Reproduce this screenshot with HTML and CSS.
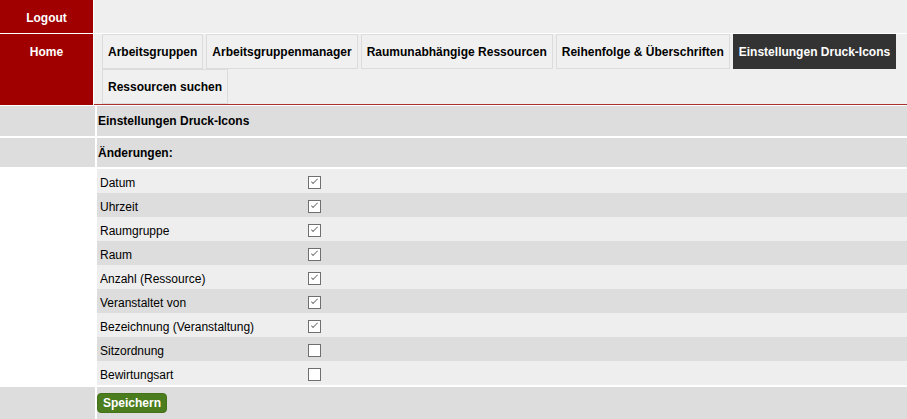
FILE: index.html
```html
<!DOCTYPE html>
<html lang="de">
<head>
    <meta charset="UTF-8">
    <meta name="viewport" content="width=device-width, initial-scale=1.0">
    <title>Einstellungen Druck-Icons</title>
    <link rel="stylesheet" href="styles.css">
</head>
<body>
    <div class="header">
        <a class="side-link logout" href="#">Logout</a>
        <div class="topbar"></div>
        <a class="side-link home" href="#">Home</a>
        <nav class="tabs">
            <a class="tab" href="#">Arbeitsgruppen</a>
            <a class="tab" href="#">Arbeitsgruppenmanager</a>
            <a class="tab" href="#">Raumunabhängige Ressourcen</a>
            <a class="tab" href="#">Reihenfolge &amp; Überschriften</a>
            <a class="tab active" href="#">Einstellungen Druck-Icons</a>
            <a class="tab" href="#">Ressourcen suchen</a>
        </nav>
    </div>

    <form class="settings">
        <div class="row head-row">
            <div class="cell"></div>
            <div class="cell title">Einstellungen Druck-Icons</div>
        </div>
        <div class="row head-row sub">
            <div class="cell"></div>
            <div class="cell title">Änderungen:</div>
        </div>

        <div class="options">
            <div class="row item">
                <div class="cell"></div>
                <label class="cell field"><span>Datum</span><input type="checkbox" checked></label>
            </div>
            <div class="row item">
                <div class="cell"></div>
                <label class="cell field"><span>Uhrzeit</span><input type="checkbox" checked></label>
            </div>
            <div class="row item">
                <div class="cell"></div>
                <label class="cell field"><span>Raumgruppe</span><input type="checkbox" checked></label>
            </div>
            <div class="row item">
                <div class="cell"></div>
                <label class="cell field"><span>Raum</span><input type="checkbox" checked></label>
            </div>
            <div class="row item">
                <div class="cell"></div>
                <label class="cell field"><span>Anzahl (Ressource)</span><input type="checkbox" checked></label>
            </div>
            <div class="row item">
                <div class="cell"></div>
                <label class="cell field"><span>Veranstaltet von</span><input type="checkbox" checked></label>
            </div>
            <div class="row item">
                <div class="cell"></div>
                <label class="cell field"><span>Bezeichnung (Veranstaltung)</span><input type="checkbox" checked></label>
            </div>
            <div class="row item">
                <div class="cell"></div>
                <label class="cell field"><span>Sitzordnung</span><input type="checkbox"></label>
            </div>
            <div class="row item">
                <div class="cell"></div>
                <label class="cell field"><span>Bewirtungsart</span><input type="checkbox"></label>
            </div>
        </div>

        <div class="row footer-row">
            <div class="cell"></div>
            <div class="cell">
                <button type="button" class="save-btn">Speichern</button>
            </div>
        </div>
    </form>
</body>
</html>
```

FILE: styles.css
```css
body {
    margin: 0;
    font-family: "Liberation Sans", Arial, sans-serif;
    font-size: 12px;
    color: #000;
    background-color: #fff;
}

/* Kopfbereich */
.header {
    display: grid;
    grid-template-columns: 93px 1fr;
    grid-template-rows: 33px 71px;
    column-gap: 1px;
    row-gap: 1px;
}

.side-link {
    padding-top: 11px;
    background-color: #a00000;
    color: #fff;
    font-weight: bold;
    text-decoration: none;
    text-align: center;
    line-height: 14px;
}

.topbar {
    background-color: #efefef;
}

.tabs {
    display: flex;
    flex-wrap: wrap;
    align-content: flex-start;
    column-gap: 3px;
    padding-left: 8px;
    background-color: #efefef;
    border-bottom: 1px solid #a83232;
}

.tab {
    height: 32px;
    padding: 1px 5px 0;
    line-height: 33px;
    border: 1px solid #dcdcdc;
    background-color: #f0f0f0;
    color: #000;
    font-weight: bold;
    text-decoration: none;
}

.tab.active {
    background-color: #333;
    border-color: #333;
    color: #fff;
}

/* Formular */
.settings {
    margin-top: 1px;
}

.row {
    display: grid;
    grid-template-columns: 95px 1fr;
    column-gap: 2px;
}

.head-row {
    height: 30px;
}

.head-row .cell {
    background-color: #ddd;
}

.head-row.sub {
    height: 29px;
    margin-top: 2px;
}

.title {
    display: flex;
    align-items: center;
    padding-left: 1px;
    font-weight: bold;
}

.options {
    margin-top: 2px;
}

.item {
    height: 24px;
}

.item .field {
    display: grid;
    grid-template-columns: 211px auto;
    align-items: center;
    justify-content: start;
    padding-left: 3px;
    background-color: #eee;
}

.item:nth-child(even) .field {
    background-color: #ddd;
}

.field span {
    padding-top: 4px;
}

.field input {
    appearance: none;
    -webkit-appearance: none;
    position: relative;
    width: 13px;
    height: 13px;
    margin: 2px 0 0 -3px;
    border: 1px solid #6f6f6f;
    background-color: #fff;
}

.field input:checked::after {
    content: "";
    position: absolute;
    left: 2px;
    top: 2px;
    width: 6px;
    height: 2px;
    border-left: 1px solid #7a7a7a;
    border-bottom: 1px solid #7a7a7a;
    transform: rotate(-45deg);
}

.footer-row {
    margin-top: 2px;
    height: 32px;
}

.footer-row .cell {
    background-color: #ddd;
}

.save-btn {
    margin-top: 6px;
    height: 20px;
    padding: 0 5px;
    border: 1px solid #437218;
    border-radius: 4px;
    background-color: #4b7d1f;
    color: #fff;
    font-family: "Liberation Sans", Arial, sans-serif;
    font-size: 12px;
    font-weight: bold;
    line-height: 18px;
    cursor: pointer;
}
```
